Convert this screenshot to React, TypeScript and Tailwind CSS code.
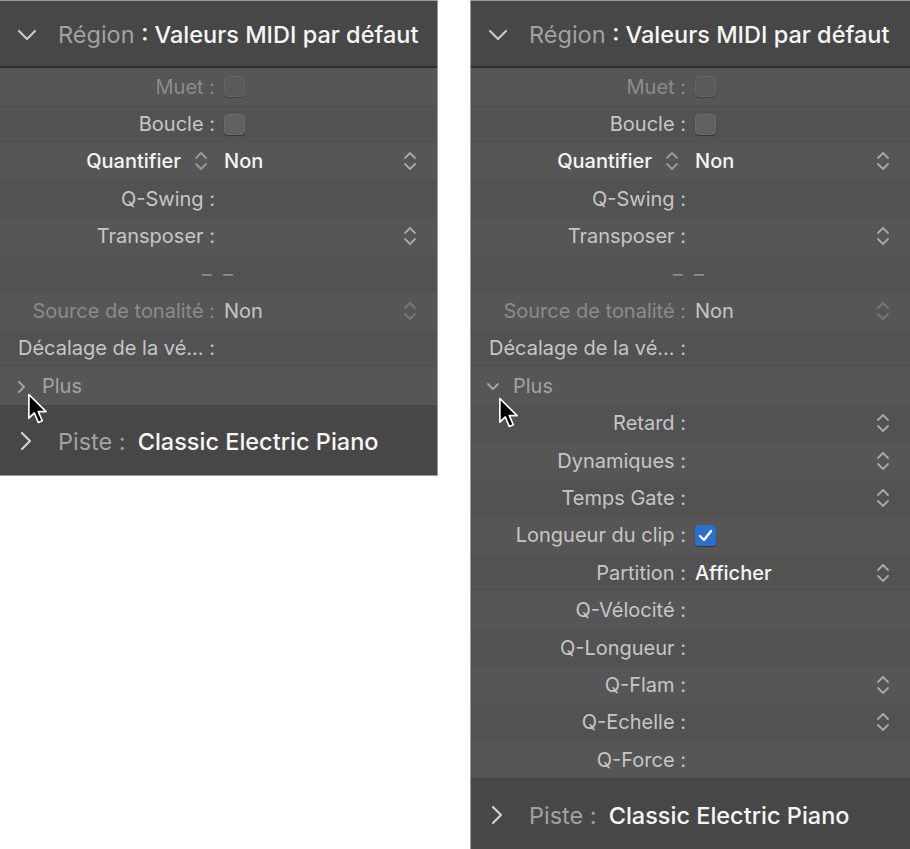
import React from "react";

type Row =
  | { kind: "field"; label: string; tone?: "dim" | "normal" | "bright"; value?: string; valueTone?: "dim" | "normal" | "bright"; check?: "off" | "on" | "dimoff"; stepper?: boolean; stepperDim?: boolean; labelStepper?: boolean }
  | { kind: "dashes" }
  | { kind: "plus"; open: boolean };

const toneClass = {
  dim: "text-[#8b8b8b]",
  normal: "text-[#c6c6c6]",
  bright: "text-[#f4f4f4] font-medium",
};

function Chevron({ dir, className }: { dir: "down" | "right"; className?: string }) {
  return dir === "down" ? (
    <svg width="20" height="12" viewBox="0 0 20 12" fill="none" className={className}>
      <path d="M2 2l8 8 8-8" stroke="currentColor" strokeWidth="2.2" strokeLinecap="round" strokeLinejoin="round" />
    </svg>
  ) : (
    <svg width="12" height="20" viewBox="0 0 12 20" fill="none" className={className}>
      <path d="M2 2l8 8-8 8" stroke="currentColor" strokeWidth="2.2" strokeLinecap="round" strokeLinejoin="round" />
    </svg>
  );
}

function Stepper({ className }: { className?: string }) {
  return (
    <svg width="14" height="22" viewBox="0 0 14 22" fill="none" className={className}>
      <path d="M2 8l5-5 5 5M2 14l5 5 5-5" stroke="currentColor" strokeWidth="1.8" strokeLinecap="round" strokeLinejoin="round" />
    </svg>
  );
}

function Checkbox({ state }: { state: "off" | "on" | "dimoff" }) {
  if (state === "on") {
    return (
      <div className="w-[21px] h-[21px] rounded-[4px] bg-[#2b6fcc] flex items-center justify-center shadow-[0_1px_1px_rgba(0,0,0,0.4)]">
        <svg width="15" height="13" viewBox="0 0 15 13" fill="none">
          <path d="M2 7l4 4 7-9" stroke="white" strokeWidth="2.4" strokeLinecap="round" strokeLinejoin="round" />
        </svg>
      </div>
    );
  }
  return (
    <div
      className={
        "w-[21px] h-[21px] rounded-[4px] border border-[#6a6a6a] shadow-[0_1px_1px_rgba(0,0,0,0.35)] " +
        (state === "dimoff" ? "bg-[#5c5c5c] opacity-70" : "bg-[#616161]")
      }
    />
  );
}

function Cursor({ className }: { className?: string }) {
  return (
    <svg width="22" height="32" viewBox="0 0 14 21" className={className}>
      <path d="M1 1v15.5l3.6-3.4 2.6 6.2 2.6-1.1-2.6-6h5.1z" fill="#000" stroke="#fff" strokeWidth="1.1" strokeLinejoin="round" />
    </svg>
  );
}

function FieldRow({ row, bg }: { row: Row; bg: string }) {
  if (row.kind === "dashes") {
    return (
      <div className={"h-[37.4px] flex items-center " + bg}>
        <div className="w-[233px] text-right text-[#8b8b8b] text-[20px]">–&nbsp;&nbsp;–</div>
      </div>
    );
  }
  if (row.kind === "plus") {
    return (
      <div className={"h-[37.4px] flex items-center gap-[13px] pl-[15px] text-[#a3a3a3] text-[20px] " + bg}>
        {row.open ? (
          <svg width="14" height="9" viewBox="0 0 14 9" fill="none" className="mt-[2px]">
            <path d="M2 2l5 5 5-5" stroke="currentColor" strokeWidth="2" strokeLinecap="round" strokeLinejoin="round" />
          </svg>
        ) : (
          <svg width="9" height="14" viewBox="0 0 9 14" fill="none" className="mt-[2px] ml-[2px] mr-[3px]">
            <path d="M2 2l5 5-5 5" stroke="currentColor" strokeWidth="2" strokeLinecap="round" strokeLinejoin="round" />
          </svg>
        )}
        <span>Plus</span>
      </div>
    );
  }
  const tone = row.tone ?? "normal";
  return (
    <div className={"h-[37.4px] flex items-center pr-[20px] text-[20px] " + bg}>
      <div className={"w-[215px] shrink-0 flex items-center justify-end whitespace-nowrap " + toneClass[tone]}>
        {row.labelStepper ? (
          <>
            <span>{row.label}</span>
            <Stepper className="ml-[13px] mr-[7px] text-[#9a9a9a]" />
          </>
        ) : (
          <span>{row.label} :</span>
        )}
      </div>
      <div className="flex-1 flex items-center pl-[9px]">
        {row.check && <Checkbox state={row.check} />}
        {row.value && <span className={toneClass[row.valueTone ?? "bright"]}>{row.value}</span>}
      </div>
      {row.stepper && <Stepper className={row.stepperDim ? "text-[#777]" : "text-[#a9a9a9]"} />}
    </div>
  );
}

const baseRows: Row[] = [
  { kind: "field", label: "Muet", tone: "dim", check: "dimoff" },
  { kind: "field", label: "Boucle ", check: "off" },
  { kind: "field", label: "Quantifier", tone: "bright", labelStepper: true, value: "Non", stepper: true },
  { kind: "field", label: "Q-Swing " },
  { kind: "field", label: "Transposer ", stepper: true },
  { kind: "dashes" },
  { kind: "field", label: "Source de tonalité", tone: "dim", value: "Non", valueTone: "normal", stepper: true, stepperDim: true },
  { kind: "field", label: "Décalage de la vé..." },
];

const moreRows: Row[] = [
  { kind: "field", label: "Retard", stepper: true },
  { kind: "field", label: "Dynamiques ", stepper: true },
  { kind: "field", label: "Temps Gate", stepper: true },
  { kind: "field", label: "Longueur du clip", check: "on" },
  { kind: "field", label: "Partition ", value: "Afficher", stepper: true },
  { kind: "field", label: "Q-Vélocité " },
  { kind: "field", label: "Q-Longueur " },
  { kind: "field", label: "Q-Flam ", stepper: true },
  { kind: "field", label: "Q-Echelle ", stepper: true },
  { kind: "field", label: "Q-Force " },
];

function Panel({ open, className }: { open: boolean; className: string }) {
  const rows: Row[] = [...baseRows, { kind: "plus", open }, ...(open ? moreRows : [])];
  return (
    <div className={"relative flex flex-col bg-[#474747] border-t border-[#8c8c8c] " + className}>
      <div className="h-[67px] flex items-center pl-[17px] border-b-2 border-[#2d2d2d]">
        <Chevron dir="down" className="text-[#c8c8c8] mt-[2px]" />
        <span className="ml-[21px] mt-[3px] text-[23.5px] text-[#a2a2a2] whitespace-nowrap">
          Région <span className="text-[#f6f6f6] font-medium">: Valeurs MIDI par défaut</span>
        </span>
      </div>
      <div className="flex flex-col">
        {rows.map((r, i) => (
          <FieldRow key={i} row={r} bg={i % 2 === 0 ? "bg-[#565656]" : "bg-[#525252]"} />
        ))}
      </div>
      <div className="flex-1 min-h-[70px] flex items-center pl-[20px] border-t border-[#444] bg-[#474747]">
        <Chevron dir="right" className="text-[#d0d0d0] mt-[2px]" />
        <span className="ml-[26px] mt-[3px] text-[23.5px] text-[#a2a2a2] whitespace-nowrap">
          Piste :<span className="ml-[12px] text-[#f6f6f6] font-medium">Classic Electric Piano</span>
        </span>
      </div>
      <Cursor className={"absolute " + (open ? "left-[27px] top-[396px]" : "left-[27px] top-[392px]")} />
    </div>
  );
}

export default function App() {
  return (
    <div className="w-[910px] h-[849px] bg-white flex items-start gap-[32px] font-['Inter',sans-serif] overflow-hidden">
      <Panel open={false} className="w-[438px] border-r border-b border-[#9a9a9a]" />
      <Panel open={true} className="w-[440px] h-[849px] border-l border-[#9a9a9a]" />
    </div>
  );
}
